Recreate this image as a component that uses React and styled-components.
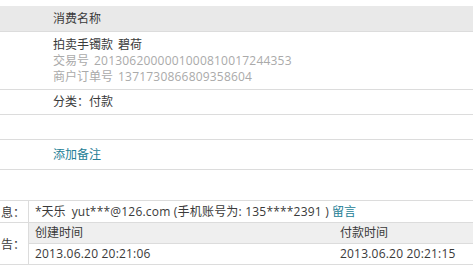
import React from 'react';
import styled, { createGlobalStyle } from 'styled-components';

const GlobalStyle = createGlobalStyle`
  body {
    margin: 0;
    background: #fff;
    font-family: "Open Sans", "Noto Sans CJK SC", sans-serif;
    font-size: 12px;
    color: #3a3a3a;
  }
`;

const Page = styled.div`
  width: 473px;
  padding-top: 6px;
`;

const Row = styled.div`
  border-bottom: 1px solid #dcdcdc;
  padding-left: 53px;
  height: ${(p) => p.h}px;
  line-height: ${(p) => p.h}px;
  background: ${(p) => (p.head ? '#e9e9e9' : '#fff')};
`;

const ItemRow = styled.div`
  border-bottom: 1px solid #dcdcdc;
  padding: 5px 0 4px 53px;
  line-height: 16px;
`;

const Line = styled.div`
  color: ${(p) => (p.muted ? '#aaa' : '#3a3a3a')};
  white-space: nowrap;
`;

const Gap = styled.span`
  margin-left: ${(p) => p.w || 5}px;
`;

const Digits = styled.span`
  letter-spacing: 0.2px;
`;

const Link = styled.a`
  color: #237d95;
  text-decoration: none;
  cursor: pointer;
`;

const Table = styled.div`
  margin-top: 30px;
  width: 473px;
  display: grid;
  grid-template-columns: 29px 1fr;
  border-top: 1px solid #dcdcdc;
`;

const Label = styled.div`
  border-right: 1px solid #dcdcdc;
  border-bottom: 1px solid #dcdcdc;
  display: flex;
  align-items: center;
  justify-content: flex-end;
  padding-right: 3px;
  white-space: nowrap;
  overflow: hidden;
`;

const Cell = styled.div`
  border-bottom: 1px solid #dcdcdc;
  padding-left: 6px;
  height: 21px;
  line-height: 21px;
  white-space: nowrap;
`;

const SubGrid = styled.div`
  display: flex;
  flex-direction: column;
`;

const TimeRow = styled.div`
  display: grid;
  grid-template-columns: 305px 1fr;
  border-bottom: 1px solid #dcdcdc;
  padding-left: 6px;
  height: 20px;
  line-height: 20px;
  letter-spacing: ${(p) => (p.head ? 0 : 0.2)}px;
  background: ${(p) => (p.head ? '#efefef' : '#fff')};
`;

export default function App() {
  return (
    <>
      <GlobalStyle />
      <Page>
        <Row head h={25}>消费名称</Row>
        <ItemRow>
          <Line>拍卖手镯款<Gap>碧荷</Gap></Line>
          <Line muted>交易号<Gap><Digits>2013062000001000810017244353</Digits></Gap></Line>
          <Line muted>商户订单号<Gap><Digits>1371730866809358604</Digits></Gap></Line>
        </ItemRow>
        <Row h={24}>分类：付款</Row>
        <Row h={24} />
        <Row h={29}>
          <Link>添加备注</Link>
        </Row>
        <Table>
          <Label>息：</Label>
          <Cell>
            *天乐<Gap w={6}><Digits>yut***@126.com (手机账号为: 135****2391 )</Digits></Gap> <Link>留言</Link>
          </Cell>
          <Label>告：</Label>
          <SubGrid>
            <TimeRow head>
              <span>创建时间</span>
              <span>付款时间</span>
            </TimeRow>
            <TimeRow>
              <span>2013.06.20 20:21:06</span>
              <span>2013.06.20 20:21:15</span>
            </TimeRow>
          </SubGrid>
        </Table>
      </Page>
    </>
  );
}
